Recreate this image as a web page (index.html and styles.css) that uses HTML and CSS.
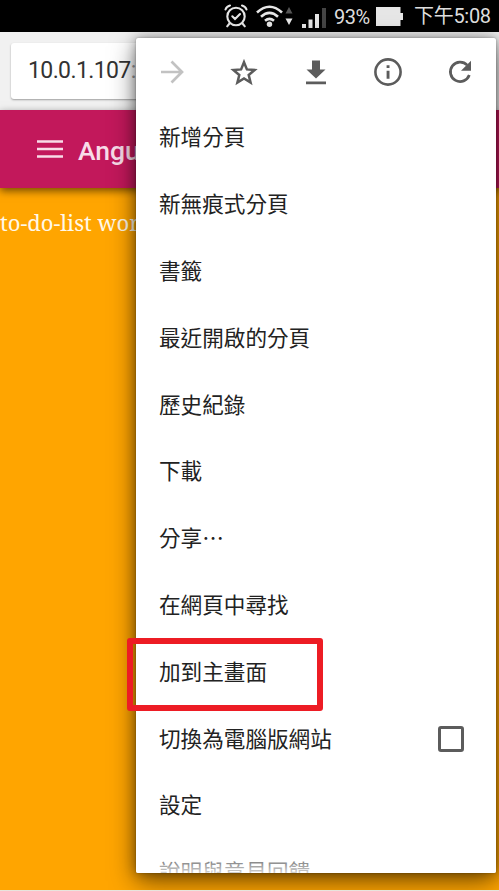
FILE: index.html
```html
<!DOCTYPE html>
<html lang="zh-Hant">
<head>
<meta charset="utf-8">
<title>to-do-list</title>
<link rel="stylesheet" href="styles.css">
</head>
<body>
<div class="screen">
  <header class="status">
    <svg class="alarm" width="24" height="24" viewBox="0 0 24 24" fill="none" stroke="#e6e6e6" stroke-width="2.1" stroke-linecap="round"><circle cx="12" cy="12.5" r="8.7"/><path d="M1.5 5.5Q2.5 2.4 6 1.5M22.5 5.5Q21.500 2.400 18 1.500M5.500 19.500l-2.300 2.800M18.500 19.500l2.300 2.800M8.300 12.300l2.700 2.700 5-5"/></svg>
    <svg class="wifi" width="38" height="24" viewBox="0 0 38 24"><g fill="none" stroke="#e6e6e6" stroke-width="2.6"><path d="M1 8.500Q13.500-3 26 8.500M5 12.700Q13.500 5 22 12.700M9 16.800Q13.500 13 18 16.800"/></g><circle cx="13.500" cy="20.300" r="2.700" fill="#e6e6e6"/><path d="M29.500 9.500h7L33 3z" fill="#555"/><path d="M29.500 14.500h7L33 21z" fill="#e6e6e6"/></svg>
    <svg class="signal" width="24" height="21" viewBox="0 0 24 21"><path d="M0 17h4v4H0zM6.500 12.500h4V21h-4zM13 7h4v14h-4z" fill="#e6e6e6"/><path d="M20 1h4v20h-4z" fill="#444"/></svg>
    <span class="percent">93%</span>
    <svg class="battery" width="27" height="19" viewBox="0 0 27 19"><path d="M0 0h24.500v6H27v7h-2.500v6H0z" fill="#e6e6e6"/></svg>
    <span class="clock">下午5:08</span>
  </header>
  <div class="browser-bar"><div class="address">10.0.1.107<span class="port">:</span></div></div>
  <div class="toolbar">
    <svg width="26" height="18" viewBox="0 0 26 18"><path d="M0 1.500h26M0 9h26M0 16.500h26" stroke="#f8dce8" stroke-width="2.600"/></svg>
    <span class="title">Angular</span>
  </div>
  <main class="content">to-do-list works!</main>

  <nav class="menu">
    <div class="actions">
      <svg width="28" height="28" viewBox="0 0 28 28" fill="none" stroke="#c2c2c2" stroke-width="2.700"><path d="M3 14h21M13.500 3.500L24 14 13.500 24.500"/></svg>
      <svg width="28" height="28" viewBox="0 0 28 28" fill="none" stroke="#5c5c5c" stroke-width="2.500"><path d="M14 4.200l2.900 7.200 7.700.6-5.900 5 1.900 7.600L14 20.500l-6.600 4.100L9.300 17l-5.900-5 7.700-.6z"/></svg>
      <svg width="28" height="28" viewBox="0 0 28 28" fill="#5c5c5c"><path d="M10 2.500h8v9h5.500L14 20.500l-9.500-9H10zM4 23.500h20v2.700H4z"/></svg>
      <svg width="28" height="28" viewBox="0 0 28 28"><circle cx="14" cy="14" r="12.600" fill="none" stroke="#5c5c5c" stroke-width="2.600"/><path d="M12.600 7.200h2.900V10h-2.900zM12.600 12.700h2.900v8h-2.900z" fill="#5c5c5c"/></svg>
      <svg width="28" height="28" viewBox="0 0 28 28"><path d="M21.200 7.200A9.700 9.700 0 1 0 23.300 17" fill="none" stroke="#5c5c5c" stroke-width="2.700"/><path d="M25 2.800v10H15z" fill="#5c5c5c"/></svg>
    </div>
    <div class="item">新增分頁</div>
    <div class="item">新無痕式分頁</div>
    <div class="item">書籤</div>
    <div class="item">最近開啟的分頁</div>
    <div class="item">歷史紀錄</div>
    <div class="item">下載</div>
    <div class="item">分享⋯</div>
    <div class="item">在網頁中尋找</div>
    <div class="item">加到主畫面</div>
    <div class="item">切換為電腦版網站<span class="checkbox"></span></div>
    <div class="item">設定</div>
    <div class="item">說明與意見回饋</div>
  </nav>
  <div class="highlight"></div>
</div>
</body>
</html>
```
FILE: styles.css
```css
* { box-sizing: border-box; }
body { margin: 0; }
.screen {
  position: relative;
  width: 499px;
  height: 891px;
  overflow: hidden;
  background: #ffa500;
  border-bottom: 1px solid #e8e4dc;
  font-family: Roboto, "Noto Sans CJK TC", sans-serif;
}
.status {
  display: flex;
  align-items: center;
  justify-content: flex-end;
  height: 32px;
  padding-right: 9px;
  background: #000;
  color: #dedede;
  font-size: 20px;
  line-height: 32px;
  white-space: nowrap;
}
.wifi { margin-left: 8px; }
.signal { margin: 3px 8px 0 8px; }
.percent { width: 37px; margin: 2px 5px 0 0; font-size: 20px; letter-spacing: -0.5px; }
.clock { width: 76px; margin-left: 11px; letter-spacing: -0.3px; }
.browser-bar {
  height: 78px;
  padding: 11px 11px 11px;
  background: #f1f1f1;
}
.address {
  height: 56px;
  padding-left: 17px;
  border-radius: 3px;
  background: #fff;
  box-shadow: 0 1px 2px rgba(0, 0, 0, .35);
  color: #333;
  font-size: 23px;
  letter-spacing: -0.6px;
  line-height: 55px;
}
.port { color: #999; }
.toolbar {
  position: relative;
  display: flex;
  align-items: center;
  gap: 15px;
  height: 78px;
  padding-left: 37px;
  background: #c2185b;
  box-shadow: 0 3px 8px rgba(0, 0, 0, .55);
  color: #f8dce8;
}
.title { padding-top: 2px; font-size: 26.5px; font-weight: 500; }
.content {
  padding-top: 18px;
  color: #fff8e8;
  font-family: "Noto Serif", "DejaVu Serif", "Liberation Serif", serif;
  font-size: 22px;
  line-height: 32px;
}
.menu {
  position: absolute;
  left: 136px;
  top: 38px;
  width: 359.5px;
  height: 835px;
  overflow: hidden;
  border-radius: 2px;
  background: #fff;
  box-shadow: 0 8px 26px rgba(0, 0, 0, .55), 0 0 12px rgba(0, 0, 0, .3), 0 0 2px rgba(0, 0, 0, .3);
}
.menu::after {
  content: "";
  position: absolute;
  inset: auto 0 0;
  height: 18px;
  background: linear-gradient(rgba(255, 255, 255, .25), rgba(255, 255, 255, .8));
}
.actions {
  display: grid;
  grid-template-columns: repeat(5, 72px);
  place-items: center;
  height: 67px;
}
.item {
  display: flex;
  align-items: center;
  justify-content: space-between;
  height: 66.8px;
  padding: 0 31.5px 5px 23px;
  color: #222;
  font-family: "Noto Sans CJK TC", sans-serif;
  font-size: 21.6px;
}
.checkbox {
  width: 26px;
  height: 26px;
  margin-top: 4px;
  border: 3px solid #5c5c5c;
  border-radius: 3px;
}
.highlight {
  position: absolute;
  left: 127px;
  top: 638px;
  width: 196px;
  height: 73px;
  border: 6px solid #ed1c24;
  border-radius: 3px;
}
```
